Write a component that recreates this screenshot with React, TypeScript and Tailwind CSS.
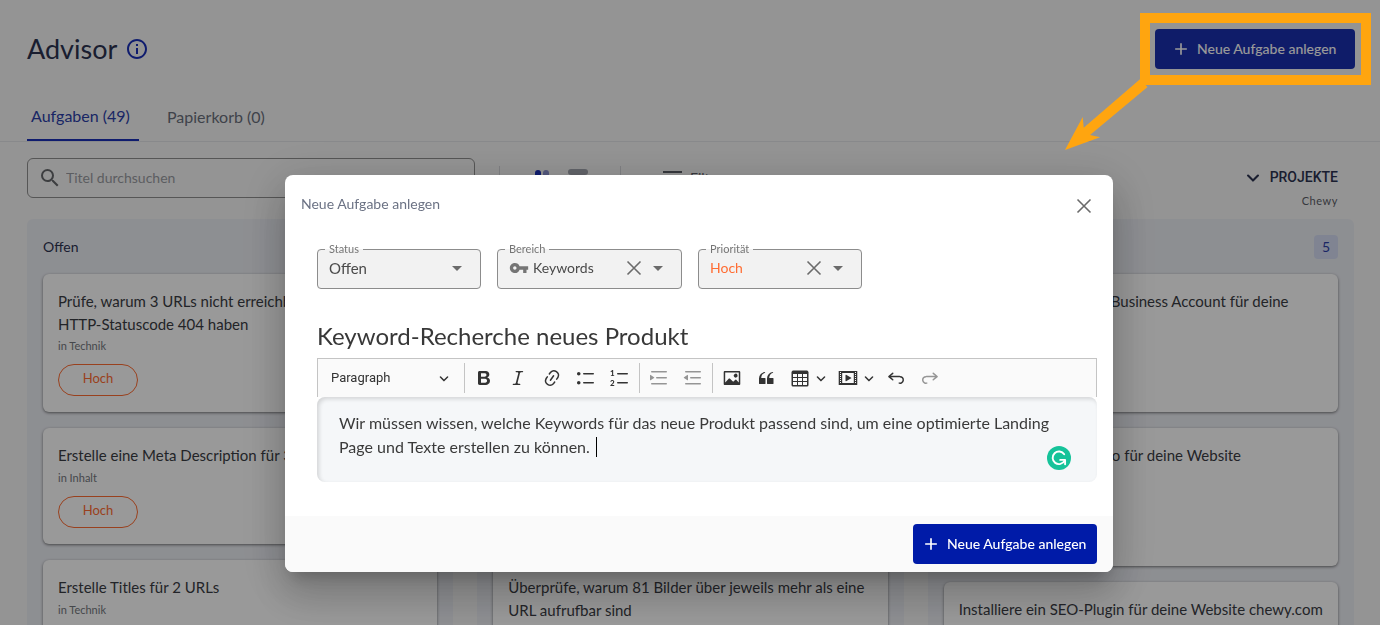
import React from 'react';
import { MdAdd, MdArrowDropDown, MdInfoOutline, MdSearch, MdVpnKey } from 'react-icons/md';

interface Task {
  title: string;
  area: string;
  priority?: string;
}

interface Column {
  name: string;
  count: number;
  tasks: Task[];
}

const columns: Column[] = [
  {
    name: 'Offen',
    count: 42,
    tasks: [
      { title: 'Prüfe, warum 3 URLs nicht erreichbar sind und\nHTTP-Statuscode 404 haben', area: 'Technik', priority: 'Hoch' },
      { title: 'Erstelle eine Meta Description für 3 URLs', area: 'Inhalt', priority: 'Hoch' },
      { title: 'Erstelle Titles für 2 URLs', area: 'Technik', priority: 'Hoch' },
    ],
  },
  {
    name: 'In Bearbeitung',
    count: 2,
    tasks: [
      { title: 'Prüfe, warum 5 URLs weiterleiten und\naktualisiere die Links', area: 'Technik', priority: 'Hoch' },
      { title: 'Kürze zu lange Titles', area: 'Inhalt', priority: 'Hoch' },
      { title: 'Überprüfe, warum 81 Bilder über jeweils mehr als eine\nURL aufrufbar sind', area: 'Technik', priority: 'Hoch' },
    ],
  },
  {
    name: 'Erledigt',
    count: 5,
    tasks: [
      { title: 'Erstelle ein Google My Business Account für deine\nWebsite', area: 'Local', priority: 'Hoch' },
      { title: 'Erstelle ein Yahoo-Konto für deine Website\nchewy.com', area: 'Technik', priority: 'Hoch' },
      { title: 'Installiere ein SEO-Plugin für deine Website chewy.com', area: 'Technik', priority: 'Hoch' },
    ],
  },
];

const icons = {
  bold: 'M10.187 17H5.773c-.637 0-1.092-.138-1.364-.415-.273-.277-.409-.718-.409-1.323V4.738c0-.617.14-1.062.419-1.332.279-.27.73-.406 1.354-.406h4.68c.69 0 1.288.041 1.793.124.506.083.96.242 1.36.478.341.197.644.447.906.75a3.262 3.262 0 0 1 .808 2.162c0 1.401-.722 2.426-2.167 3.075C15.05 10.175 16 11.315 16 13.01a3.756 3.756 0 0 1-2.296 3.504 6.1 6.1 0 0 1-1.517.377c-.571.073-1.238.11-2 .11zm-.217-6.217H7v4.087h3.069c1.977 0 2.965-.69 2.965-2.072 0-.707-.256-1.22-.768-1.537-.512-.319-1.277-.478-2.296-.478zM7 5.13v3.619h2.606c.729 0 1.292-.067 1.69-.2a1.6 1.6 0 0 0 .91-.765c.165-.267.247-.566.247-.897 0-.707-.26-1.176-.778-1.409-.519-.232-1.31-.348-2.375-.348H7z',
  italic: 'm9.586 14.633.021.004c-.036.335.095.655.393.962.082.083.173.15.274.201h1.474a.6.6 0 1 1 0 1.2H5.304a.6.6 0 0 1 0-1.2h1.15c.474-.07.809-.182 1.005-.334.157-.122.291-.32.404-.597l2.416-9.55a1.053 1.053 0 0 0-.281-.823 1.12 1.12 0 0 0-.442-.296H8.15a.6.6 0 0 1 0-1.2h6.443a.6.6 0 1 1 0 1.2h-1.195c-.376.056-.65.155-.823.296-.215.175-.423.439-.623.79l-2.366 9.347z',
  link: 'm11.077 15 .991-1.416a.75.75 0 1 1 1.229.86l-1.148 1.64a.748.748 0 0 1-.217.206 5.251 5.251 0 0 1-8.503-5.955.741.741 0 0 1 .12-.274l1.147-1.639a.75.75 0 1 1 1.228.86L4.933 10.7l.006.003a3.75 3.75 0 0 0 6.132 4.294l.006.004zm5.494-5.335a.748.748 0 0 1-.12.274l-1.147 1.639a.75.75 0 1 1-1.228-.86l.86-1.23a3.75 3.75 0 0 0-6.144-4.301l-.86 1.229a.75.75 0 0 1-1.229-.86l1.148-1.64a.748.748 0 0 1 .217-.206 5.251 5.251 0 0 1 8.503 5.955zm-4.563-2.532a.75.75 0 0 1 .184 1.045l-3.155 4.505a.75.75 0 1 1-1.229-.86l3.155-4.506a.75.75 0 0 1 1.045-.184z',
  bullets: 'M7 5.75c0 .414.336.75.75.75h9.5a.75.75 0 1 0 0-1.5h-9.5a.75.75 0 0 0-.75.75zm-6 0C1 4.784 1.777 4 2.75 4c.966 0 1.75.777 1.75 1.75 0 .966-.777 1.75-1.75 1.75C1.784 7.5 1 6.723 1 5.75zm6 9c0 .414.336.75.75.75h9.5a.75.75 0 1 0 0-1.5h-9.5a.75.75 0 0 0-.75.75zm-6 0c0-.966.777-1.75 1.75-1.75.966 0 1.75.777 1.75 1.75 0 .966-.777 1.75-1.75 1.75-.966 0-1.75-.777-1.75-1.75z',
  lines: 'M7 5.75c0 .414.336.75.75.75h9.5a.75.75 0 1 0 0-1.5h-9.5a.75.75 0 0 0-.75.75zm0 9c0 .414.336.75.75.75h9.5a.75.75 0 1 0 0-1.5h-9.5a.75.75 0 0 0-.75.75z',
  indent: 'M2 3.75c0 .414.336.75.75.75h14.5a.75.75 0 1 0 0-1.5H2.75a.75.75 0 0 0-.75.75zm5 6c0 .414.336.75.75.75h9.5a.75.75 0 1 0 0-1.5h-9.5a.75.75 0 0 0-.75.75zM2.75 16.5h14.5a.75.75 0 1 0 0-1.5H2.75a.75.75 0 1 0 0 1.5zM1.632 6.95 5.02 9.358a.4.4 0 0 1-.013.661l-3.39 2.207A.4.4 0 0 1 1 11.892V7.275a.4.4 0 0 1 .632-.326z',
  outdent: 'M2 3.75c0 .414.336.75.75.75h14.5a.75.75 0 1 0 0-1.5H2.75a.75.75 0 0 0-.75.75zm5 6c0 .414.336.75.75.75h9.5a.75.75 0 1 0 0-1.5h-9.5a.75.75 0 0 0-.75.75zM2.75 16.5h14.5a.75.75 0 1 0 0-1.5H2.75a.75.75 0 1 0 0 1.5zM5 7.275v4.617a.4.4 0 0 1-.619.335L.99 10.02a.4.4 0 0 1-.013-.661l3.39-2.407A.4.4 0 0 1 5 7.275z',
  image: 'M6.91 10.54c.26-.23.64-.21.88.03l3.36 3.14 2.23-2.06a.64.64 0 0 1 .87 0l2.52 2.97V4.5H3.2v10.12l3.71-4.08zm10.27-7.51c.6 0 1.09.47 1.09 1.05v11.84c0 .59-.49 1.06-1.09 1.06H2.79c-.6 0-1.09-.47-1.09-1.06V4.08c0-.58.49-1.05 1.1-1.05h14.38zm-5.22 5.56a1.96 1.96 0 1 1 3.4-1.96 1.96 1.96 0 0 1-3.4 1.96z',
  quote: 'M3 10.423a6.5 6.5 0 0 1 6.056-6.408l.038.67C6.448 5.423 5.354 7.663 5.22 10H9c.552 0 .5.432.5.986v4.511c0 .554-.448.503-1 .503h-5c-.552 0-.5-.449-.5-1.003v-4.574zm8 0a6.5 6.5 0 0 1 6.056-6.408l.038.67c-2.646.739-3.74 2.979-3.873 5.315H17c.552 0 .5.432.5.986v4.511c0 .554-.448.503-1 .503h-5c-.552 0-.5-.449-.5-1.003v-4.574z',
  table: 'M3 6v3h4V6H3zm0 4v3h4v-3H3zm0 4v3h4v-3H3zm5 3h4v-3H8v3zm5 0h4v-3h-4v3zm4-4v-3h-4v3h4zm0-4V6h-4v3h4zm1.5 8a1.5 1.5 0 0 1-1.5 1.5H3A1.5 1.5 0 0 1 1.5 17V4c.222-.863 1.068-1.5 2-1.5h13c.932 0 1.778.637 2 1.5v13zM12 13v-3H8v3h4zm0-4V6H8v3h4z',
  media: 'M18.68 3.03c.6 0 .59-.03.59.55v12.84c0 .59.01.56-.59.56H1.29c-.6 0-.59.03-.59-.56V3.58c0-.58-.01-.55.6-.55h17.38zM15.77 15V5H4.2v10h11.57zM2 4v1h1V4H2zm0 2v1h1V6H2zm0 2v1h1V8H2zm0 2v1h1v-1H2zm0 2v1h1v-1H2zm0 2v1h1v-1H2zM17 4v1h1V4h-1zm0 2v1h1V6h-1zm0 2v1h1V8h-1zm0 2v1h1v-1h-1zm0 2v1h1v-1h-1zm0 2v1h1v-1h-1zM7.5 7.177a.4.4 0 0 1 .593-.351l5.133 2.824a.4.4 0 0 1 0 .7l-5.133 2.824a.4.4 0 0 1-.593-.35V7.176v.001z',
  undo: 'm5.042 9.367 2.189 1.837a.75.75 0 0 1-.965 1.149l-3.788-3.18a.747.747 0 0 1-.21-.284.75.75 0 0 1 .17-.945L6.23 4.762a.75.75 0 1 1 .964 1.15L4.863 7.866h8.917A.75.75 0 0 1 14 7.9a4 4 0 1 1-1.477 7.718l.344-1.489a2.5 2.5 0 1 0 1.094-4.73l.008-.032H5.042z',
  redo: 'm14.958 9.367-2.189 1.837a.75.75 0 0 0 .965 1.149l3.788-3.18a.747.747 0 0 0 .21-.284.75.75 0 0 0-.17-.945L13.77 4.762a.75.75 0 1 0-.964 1.15l2.331 1.955H6.22A.75.75 0 0 0 6 7.9a4 4 0 1 0 1.477 7.718l-.344-1.489A2.5 2.5 0 1 1 6.039 9.4l-.008-.032h8.927z',
};

const Chevron: React.FC<{ className: string }> = ({ className }) => (
  <svg viewBox="0 0 10 10" className={className} fill="currentColor">
    <path d="M.941 4.523a.75.75 0 1 1 1.06-1.06l3.006 3.005 3.005-3.005a.75.75 0 1 1 1.06 1.06l-3.549 3.55a.75.75 0 0 1-1.168-.136L.941 4.523z" />
  </svg>
);

const Cross: React.FC = () => (
  <svg viewBox="0 0 16 16" className="w-4 h-4" fill="none" stroke="currentColor" strokeWidth="1.6">
    <path d="M1.5 1.5l13 13M14.5 1.5l-13 13" />
  </svg>
);

interface ToolProps {
  label: string;
  path: string;
  disabled?: boolean;
  menu?: boolean;
  children?: React.ReactNode;
}

const Tool: React.FC<ToolProps> = ({ label, path, disabled, menu, children }) => (
  <button
    type="button"
    aria-label={label}
    disabled={disabled}
    className={`flex items-center h-8 px-[7px] text-[#333] disabled:opacity-50 ${menu ? 'gap-1.5 w-12' : 'w-[34px]'}`}
  >
    <svg viewBox="0 0 20 20" className="w-5 h-5 shrink-0" fill="currentColor">
      <path d={path} />
      {children}
    </svg>
    {menu && <Chevron className="w-2.5 h-2.5 shrink-0" />}
  </button>
);

const Separator: React.FC = () => <div className="w-px h-[30px] mx-0.5 bg-[#c4c4c4]" />;

interface FieldProps {
  id: string;
  label: string;
  value: string;
  className: string;
  valueClass: string;
  clearable?: boolean;
  icon?: React.ReactNode;
}

const Field: React.FC<FieldProps> = ({ id, label, value, className, valueClass, clearable, icon }) => (
  <fieldset className={`min-w-0 h-[46px] border border-[#8c8c8c] rounded bg-[#f2f2f2] px-[11px] ${className}`}>
    <legend className="h-3 -ml-1 px-1 text-[11px] leading-3 text-[#757575]">
      <label htmlFor={id}>{label}</label>
    </legend>
    <div className="flex items-center h-[26px] text-[#6b6b6b]">
      {icon}
      <select id={id} defaultValue={value} className={`flex-1 min-w-0 appearance-none bg-transparent outline-none ${valueClass}`}>
        <option>{value}</option>
      </select>
      {clearable && (
        <button type="button" aria-label={`${label} leeren`} className="mr-1">
          <Cross />
        </button>
      )}
      <MdArrowDropDown className="w-6 h-6 shrink-0" />
    </div>
  </fieldset>
);

const TaskCard: React.FC<{ task: Task }> = ({ task }) => (
  <article className="min-w-0 px-[15px] py-4 bg-white rounded-md shadow-[0_1px_3px_rgba(0,0,0,0.5)]">
    <h3 className="min-h-6 text-[15px] leading-[23px] text-[#3a3c44] whitespace-pre">{task.title}</h3>
    <p className="text-[11px] leading-5 text-[#74777d]">in {task.area}</p>
    {task.priority && (
      <span className="flex items-center justify-center w-20 h-8 mt-2 pb-0.5 border border-[#ff6d33] rounded-full text-[13px] text-[#ff6d33]">
        {task.priority}
      </span>
    )}
  </article>
);

const BoardPage: React.FC = () => (
  <div className="h-screen overflow-hidden bg-[#f7f7f7]">
    <header className="flex items-center justify-between pl-[27px] pr-[25px] pt-[29px]">
      <h1 className="flex items-center gap-2 text-[27px] leading-10 text-[#2c3350]">
        Advisor
        <MdInfoOutline className="w-6 h-6 text-[#1a30b8]" />
      </h1>
      <button type="button" className="flex items-center gap-1.5 w-50 h-10 px-4 rounded bg-[#1a30b0] text-sm font-medium text-white">
        <MdAdd className="w-5 h-5" />
        Neue Aufgabe anlegen
      </button>
    </header>

    <nav className="flex gap-6 mt-[23px] pl-[27px] border-b border-[#e3e4e8] text-base">
      <a href="#aufgaben" className="flex items-center min-w-28 h-[49px] px-1 -mb-px border-b-2 border-[#1a30b8] text-[#2c3fa8]">
        Aufgaben (49)
      </a>
      <a href="#papierkorb" className="flex items-center min-w-28 h-[49px] px-1 text-[#6a6f7c]">
        Papierkorb (0)
      </a>
    </nav>

    <div className="flex items-start pl-[27px] pr-[42px] pt-4 h-[77px]">
      <label className="flex items-center w-[448px] h-10 px-2.5 gap-1 border border-[#8f8f8f] rounded-md">
        <MdSearch className="w-6 h-6 text-[#66686c]" />
        <input type="text" aria-label="Titel durchsuchen" placeholder="Titel durchsuchen" className="flex-1 text-sm outline-none placeholder:text-[#9a9ca2]" />
      </label>
      <div className="flex items-center h-10 ml-6">
        <div className="w-px h-6 bg-[#d5d6da]" />
        <button type="button" aria-label="Spaltenansicht" className="flex gap-0.5 ml-[35px]">
          <span className="w-1.5 h-4 rounded-sm bg-[#1a30b8]" />
          <span className="w-1.5 h-4 rounded-sm bg-[#8b93d0]" />
        </button>
        <button type="button" aria-label="Listenansicht" className="grid gap-1.5 ml-[19px]">
          <span className="w-5 h-1.5 rounded-sm bg-[#a2a5ae]" />
          <span className="w-5 h-1.5 rounded-sm bg-[#a2a5ae]" />
        </button>
        <div className="w-px h-6 ml-8 bg-[#d5d6da]" />
        <button type="button" className="flex items-center gap-2 ml-[42px] text-sm text-[#5b5e67]">
          <span className="grid gap-1 justify-items-center">
            <span className="w-[19px] h-0.5 bg-[#5b5e67]" />
            <span className="w-3 h-0.5 bg-[#5b5e67]" />
            <span className="w-1.5 h-0.5 bg-[#5b5e67]" />
          </span>
          Filter
        </button>
      </div>
      <div className="ml-auto text-right">
        <button type="button" className="flex items-center gap-2.5 h-[38px] font-[Roboto,sans-serif] text-sm font-medium text-[#2c3350]">
          <Chevron className="w-3.5 h-3.5" />
          PROJEKTE
        </button>
        <p className="text-[11px] leading-[10px] tracking-wider text-[#5b5e67]">Chewy</p>
      </div>
    </div>

    <main className="grid grid-cols-3 gap-6 pl-[27px] pr-[26px]">
      {columns.map((column) => (
        <section key={column.name} className="min-w-0 px-4 pb-4 rounded-md bg-[#eceef4]">
          <div className="flex items-center justify-between h-[55px]">
            <h2 className="text-sm text-[#2c3350]">{column.name}</h2>
            <span className="flex items-center justify-center min-w-6 h-6 px-1 rounded bg-[#d5ddf3] text-sm text-[#2c3fa8]">
              {column.count}
            </span>
          </div>
          <div className="grid grid-cols-1 gap-4">
            {column.tasks.map((task) => (
              <TaskCard key={task.title} task={task} />
            ))}
          </div>
        </section>
      ))}
    </main>
  </div>
);

const TaskDialog: React.FC = () => (
  <div
    role="dialog"
    aria-label="Neue Aufgabe anlegen"
    className="w-[60vw] overflow-hidden rounded-lg bg-white shadow-[0_11px_15px_-7px_rgba(0,0,0,0.2),0_24px_38px_3px_rgba(0,0,0,0.14),0_9px_46px_8px_rgba(0,0,0,0.12)]"
  >
    <div className="flex items-center justify-between h-[58px] pl-4 pr-[21px]">
      <h2 className="text-sm text-[#6b7284]">Neue Aufgabe anlegen</h2>
      <button type="button" aria-label="Schließen" className="mt-1 text-[#6b6b6b]">
        <Cross />
      </button>
    </div>

    <div className="pl-8 pr-4 pt-[10px] pb-[34px]">
      <div className="flex gap-4">
        <Field id="status" label="Status" value="Offen" className="w-[164px]" valueClass="text-[15px] text-[#4a4a4a]" />
        <Field
          id="bereich"
          label="Bereich"
          value="Keywords"
          className="w-[185px]"
          valueClass="pl-1 text-sm text-[#4a4a4a]"
          clearable
          icon={<MdVpnKey className="w-5 h-5 shrink-0 text-[#757575]" />}
        />
        <Field id="prioritaet" label="Priorität" value="Hoch" className="w-[164px]" valueClass="text-sm text-[#ff6d33]" clearable />
      </div>

      <input
        type="text"
        aria-label="Titel"
        defaultValue="Keyword-Recherche neues Produkt"
        className="block w-full h-9 mt-7 text-2xl text-[#383838] outline-none"
      />

      <div className="flex items-center h-[39px] mt-[5px] border border-b-0 border-[#c4c4c4] bg-[#fafafa]">
        <button type="button" className="flex items-center justify-between w-36 h-8 px-[13px] font-[Roboto,sans-serif] text-[13px] text-[#333]">
          Paragraph
          <Chevron className="w-2.5 h-2.5" />
        </button>
        <Separator />
        <Tool label="Fett" path={icons.bold} />
        <Tool label="Kursiv" path={icons.italic} />
        <Tool label="Link" path={icons.link} />
        <Tool label="Aufzählung" path={icons.bullets} />
        <Tool label="Nummerierte Liste" path={icons.lines}>
          <text x="0" y="8" fontSize="8" fontWeight="900">1</text>
          <text x="0" y="18" fontSize="8" fontWeight="900">2</text>
        </Tool>
        <Separator />
        <Tool label="Einzug vergrößern" path={icons.indent} disabled />
        <Tool label="Einzug verkleinern" path={icons.outdent} disabled />
        <Separator />
        <Tool label="Bild" path={icons.image} />
        <Tool label="Zitat" path={icons.quote} />
        <Tool label="Tabelle" path={icons.table} menu />
        <Tool label="Medien" path={icons.media} menu />
        <Tool label="Rückgängig" path={icons.undo} />
        <Tool label="Wiederholen" path={icons.redo} disabled />
      </div>

      <div className="relative rounded-lg bg-[#f5f7f9] shadow-[inset_2px_2px_4px_rgba(0,0,0,0.14)]">
        <textarea
          aria-label="Beschreibung"
          rows={2}
          className="block w-full h-[85px] px-[22px] pt-[14px] resize-none bg-transparent text-base leading-6 text-[#3a3a3a] outline-none"
          defaultValue="Wir müssen wissen, welche Keywords für das neue Produkt passend sind, um eine optimierte Landing Page und Texte erstellen zu können."
        />
        <span className="absolute left-[279px] top-10 w-px h-5 bg-black" />
        <svg viewBox="0 0 24 24" className="absolute right-[26px] bottom-3 w-6 h-6">
          <circle cx="12" cy="12" r="12" fill="#15c39a" />
          <path d="M17.2 8.3A6.3 6.3 0 1 0 17.6 14.6" fill="none" stroke="#fff" strokeWidth="1.9" strokeLinecap="round" />
          <path d="M13.2 13.9h4.9v4.4" fill="none" stroke="#fff" strokeWidth="1.9" strokeLinecap="round" strokeLinejoin="round" />
        </svg>
      </div>
    </div>

    <div className="flex justify-end px-4 py-2 bg-[#fafafa]">
      <button type="button" className="flex items-center gap-1.5 w-46 h-10 px-2 rounded bg-[#001ba8] text-sm font-medium text-white">
        <MdAdd className="w-5 h-5" />
        Neue Aufgabe anlegen
      </button>
    </div>
  </div>
);

const App: React.FC = () => (
  <div className="font-[Lato,'Noto_Sans',sans-serif]">
    <BoardPage />

    <div className="fixed inset-0 flex items-start justify-center pt-[175px] pl-[18px] bg-black/40">
      <TaskDialog />
    </div>

    {/* Callout around the create button */}
    <div className="fixed top-[13px] right-[9px] w-[231px] h-[72px] border-10 border-[#ffa50f]" />
    <svg viewBox="0 0 86 78" className="fixed top-[76px] right-[230px] w-[86px] h-[78px]" fill="#ffa50f">
      <path d="M76 3.3L83.5 11L26 59L36 61.3L1 74L18.7 41L19.7 51.7Z" />
    </svg>
  </div>
);

export default App;
